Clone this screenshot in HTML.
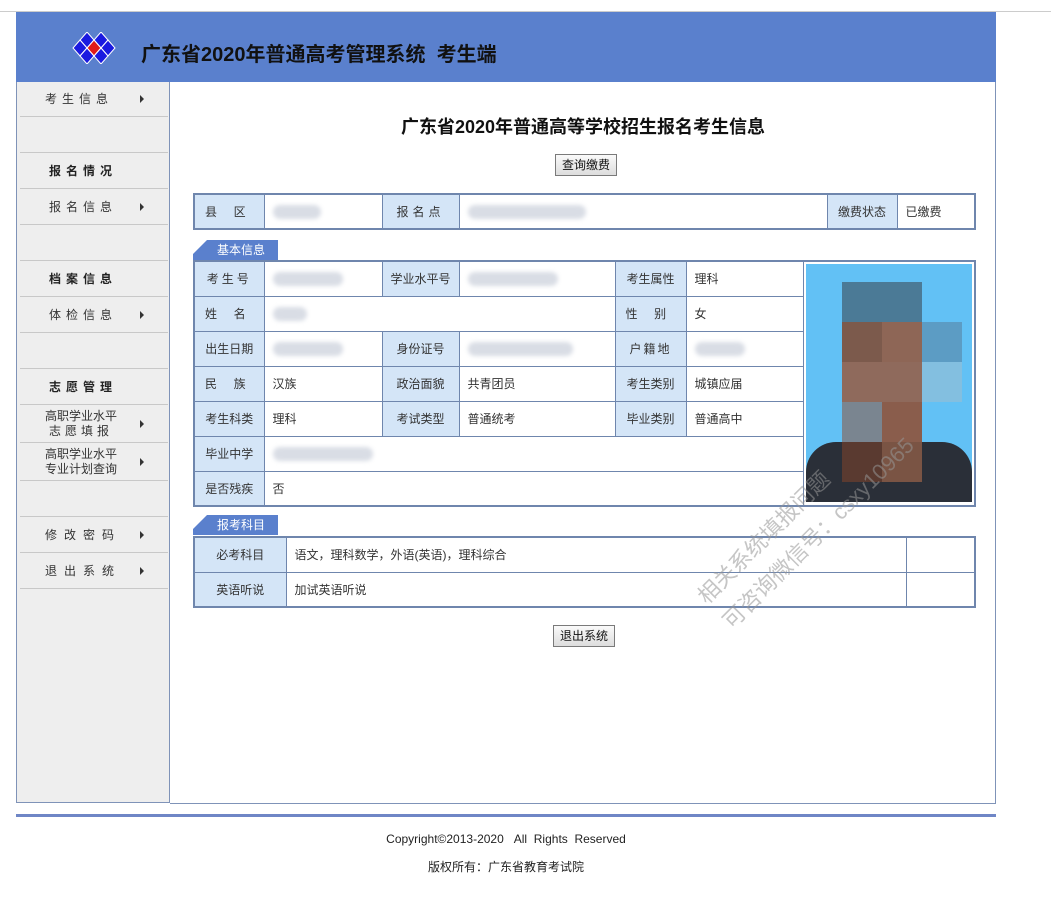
<!DOCTYPE html>
<html><head><meta charset="utf-8"><style>
*{margin:0;padding:0;box-sizing:border-box}
body{width:1051px;height:898px;background:#fff;font-family:"Liberation Sans","Noto Sans CJK SC",sans-serif;font-size:12px;color:#222;position:relative;overflow:hidden}
.abs{position:absolute}
#topline{left:0;top:11px;width:1051px;height:1px;background:#ccc}
#hdr{left:16px;top:12px;width:980px;height:70px;background:#5a80cd}
#hdr .t{position:absolute;left:125px;top:26px;font-size:20px;font-weight:bold;color:#111}
#side{left:16px;top:82px;width:154px;height:721px;background:#eeeeee;border-left:1px solid #7f93b8;border-right:1px solid #7f93b8;border-bottom:1px solid #7f93b8}
.si{position:absolute;left:3px;width:148px;border-bottom:1px solid #c8c8c8;font-size:12px;color:#333;letter-spacing:5px}
.si .a{position:absolute;left:120px;top:50%;margin-top:-4px;width:0;height:0;border-left:4px solid #333;border-top:4px solid transparent;border-bottom:4px solid transparent}
#main{left:170px;top:82px;width:826px;height:722px;border-right:1px solid #7f93b8;border-bottom:1px solid #7f93b8}
table{border-collapse:collapse;position:absolute;table-layout:fixed}
td{border:1px solid #6f86ad;height:35px;padding:0 8px;font-size:12px;color:#333;white-space:nowrap;overflow:hidden}
td.l{background:#d4e5f7;text-align:center;padding:0}
.tb{border:2px solid #6f86ad}
.tab{position:absolute;height:20px;background:#5a80cd;color:#fff;font-size:12px;line-height:20px;padding-left:24px;clip-path:polygon(14px 0,100% 0,100% 100%,0 100%,0 14px)}
.btn{position:absolute;border:1px solid #7a7a7a;background:linear-gradient(#fafafa,#ddd);font-size:12px;text-align:center;line-height:20px;color:#111}
.blur{display:inline-block;height:14px;background:#d9dde5;border-radius:7px;vertical-align:middle;filter:blur(2px)}
#ft{left:16px;top:814px;width:980px;height:3px;background:#6f86c6}
.wm{position:absolute;color:rgba(150,150,150,.55);font-size:22px;transform:rotate(-45deg);transform-origin:left bottom;white-space:nowrap}
</style></head><body>
<div class="abs" id="topline"></div>
<div class="abs" id="hdr">
<svg style="position:absolute;left:52px;top:20px" width="52" height="32" viewBox="0 0 52 32">
<g stroke="#fff" stroke-width="1">
<polygon points="19,0 26,8 19,16 12,8" fill="#1a1ae0"/>
<polygon points="33,0 40,8 33,16 26,8" fill="#1a1ae0"/>
<polygon points="12,8 19,16 12,24 5,16" fill="#1a1ae0"/>
<polygon points="26,8 33,16 26,24 19,16" fill="#e01a1a"/>
<polygon points="40,8 47,16 40,24 33,16" fill="#1a1ae0"/>
<polygon points="19,16 26,24 19,32 12,24" fill="#1a1ae0"/>
<polygon points="33,16 40,24 33,32 26,24" fill="#1a1ae0"/>
</g></svg>
<div class="t">广东省2020年普通高考管理系统&nbsp;&nbsp;考生端</div>
</div>
<div class="abs" id="side">
<div class="si" style="top:0;height:35px;line-height:34px;padding-left:25px">考生信息<span class="a"></span></div>
<div class="si" style="top:35px;height:36px"></div>
<div class="si" style="top:71px;height:36px;line-height:36px;padding-left:29px;font-weight:bold;color:#222">报名情况</div>
<div class="si" style="top:107px;height:36px;line-height:36px;padding-left:29px">报名信息<span class="a"></span></div>
<div class="si" style="top:143px;height:36px"></div>
<div class="si" style="top:179px;height:36px;line-height:36px;padding-left:29px;font-weight:bold;color:#222">档案信息</div>
<div class="si" style="top:215px;height:36px;line-height:36px;padding-left:29px">体检信息<span class="a"></span></div>
<div class="si" style="top:251px;height:36px"></div>
<div class="si" style="top:287px;height:36px;line-height:36px;padding-left:29px;font-weight:bold;color:#222">志愿管理</div>
<div class="si" style="top:323px;height:38px;line-height:15px;padding-top:4px;text-align:center;letter-spacing:0;padding-right:26px">高职学业水平<br><span style="letter-spacing:4px">志愿填报</span><span class="a"></span></div>
<div class="si" style="top:361px;height:38px;line-height:15px;padding-top:4px;text-align:center;letter-spacing:0;padding-right:26px">高职学业水平<br>专业计划查询<span class="a"></span></div>
<div class="si" style="top:399px;height:36px"></div>
<div class="si" style="top:435px;height:36px;line-height:36px;padding-left:25px;letter-spacing:7px">修改密码<span class="a"></span></div>
<div class="si" style="top:471px;height:36px;line-height:36px;padding-left:25px;letter-spacing:7px">退出系统<span class="a"></span></div>
</div>
<div class="abs" id="main"></div>
<div class="abs" style="left:170px;top:113px;width:826px;text-align:center;font-size:18px;font-weight:bold;color:#111">广东省2020年普通高等学校招生报名考生信息</div>
<div class="btn" style="left:555px;top:154px;width:62px;height:22px">查询缴费</div>

<table class="tb" style="left:193px;top:193px;width:781px">
<colgroup><col style="width:70px"><col style="width:118px"><col style="width:77px"><col style="width:368px"><col style="width:70px"><col style="width:78px"></colgroup>
<tr><td class="l" style="text-align:left;padding-left:10px">县&nbsp;&nbsp;&nbsp;&nbsp;&nbsp;区</td><td><span class="blur" style="width:48px"></span></td><td class="l" style="letter-spacing:4px">报名点</td><td><span class="blur" style="width:118px"></span></td><td class="l">缴费状态</td><td>已缴费</td></tr>
</table>

<div class="tab" style="left:193px;top:240px;width:85px">基本信息</div>
<table class="tb" style="left:193px;top:260px;width:781px">
<colgroup><col style="width:70px"><col style="width:118px"><col style="width:77px"><col style="width:156px"><col style="width:71px"><col style="width:117px"><col style="width:172px"></colgroup>
<tr><td class="l" style="letter-spacing:3px">考生号</td><td><span class="blur" style="width:70px"></span></td><td class="l">学业水平号</td><td><span class="blur" style="width:90px"></span></td><td class="l">考生属性</td><td>理科</td><td rowspan="7" style="padding:0;background:#fff;vertical-align:top">
<div style="position:relative;margin:2px;width:166px;height:238px;background:#62c1f5;overflow:hidden">
<div style="position:absolute;left:36px;top:18px;width:80px;height:40px;background:#4b7a96"></div>
<div style="position:absolute;left:36px;top:58px;width:40px;height:40px;background:#7c5a4c"></div>
<div style="position:absolute;left:76px;top:58px;width:40px;height:40px;background:#8e6656"></div>
<div style="position:absolute;left:116px;top:58px;width:40px;height:40px;background:#5c9cc4"></div>
<div style="position:absolute;left:36px;top:98px;width:80px;height:40px;background:#8f6a5c"></div>
<div style="position:absolute;left:116px;top:98px;width:40px;height:40px;background:#83bfe0"></div>
<div style="position:absolute;left:36px;top:138px;width:40px;height:40px;background:#7a8590"></div>
<div style="position:absolute;left:76px;top:138px;width:40px;height:40px;background:#8a5d4c"></div>
<div style="position:absolute;left:0;top:178px;width:166px;height:60px;background:#2a2f38;border-radius:30px 30px 0 0"></div>
<div style="position:absolute;left:36px;top:178px;width:40px;height:40px;background:#5a3a30"></div>
<div style="position:absolute;left:76px;top:178px;width:40px;height:40px;background:#7a5444"></div>
</div></td></tr>
<tr><td class="l" style="text-align:left;padding-left:10px">姓&nbsp;&nbsp;&nbsp;&nbsp;&nbsp;名</td><td colspan="3"><span class="blur" style="width:34px"></span></td><td class="l" style="text-align:left;padding-left:10px">性&nbsp;&nbsp;&nbsp;&nbsp;&nbsp;别</td><td>女</td></tr>
<tr><td class="l">出生日期</td><td><span class="blur" style="width:70px"></span></td><td class="l">身份证号</td><td><span class="blur" style="width:105px"></span></td><td class="l" style="letter-spacing:2px">户籍地</td><td><span class="blur" style="width:50px"></span></td></tr>
<tr><td class="l" style="text-align:left;padding-left:10px">民&nbsp;&nbsp;&nbsp;&nbsp;&nbsp;族</td><td>汉族</td><td class="l">政治面貌</td><td>共青团员</td><td class="l">考生类别</td><td>城镇应届</td></tr>
<tr><td class="l">考生科类</td><td>理科</td><td class="l">考试类型</td><td>普通统考</td><td class="l">毕业类别</td><td>普通高中</td></tr>
<tr><td class="l">毕业中学</td><td colspan="5"><span class="blur" style="width:100px"></span></td></tr>
<tr><td class="l">是否残疾</td><td colspan="5">否</td></tr>
</table>

<div class="tab" style="left:193px;top:515px;width:85px">报考科目</div>
<table class="tb" style="left:193px;top:536px;width:781px">
<colgroup><col style="width:92px"><col style="width:620px"><col style="width:69px"></colgroup>
<tr><td class="l" style="height:34px">必考科目</td><td>语文，理科数学，外语(英语)，理科综合</td><td></td></tr>
<tr><td class="l" style="height:33px">英语听说</td><td>加试英语听说</td><td></td></tr>
</table>
<div class="btn" style="left:553px;top:625px;width:62px;height:22px">退出系统</div>

<div class="wm" style="left:712px;top:578px">相关系统填报问题</div>
<div class="wm" style="left:737px;top:603px">可咨询微信号：csxy10965</div>

<div class="abs" id="ft"></div>
<div class="abs" style="left:0;top:832px;width:1012px;text-align:center;font-size:12px;color:#222">Copyright©2013-2020&nbsp;&nbsp;&nbsp;All&nbsp;&nbsp;Rights&nbsp;&nbsp;Reserved</div>
<div class="abs" style="left:0;top:858px;width:1012px;text-align:center;font-size:12px;color:#222">版权所有：广东省教育考试院</div>
</body></html>
